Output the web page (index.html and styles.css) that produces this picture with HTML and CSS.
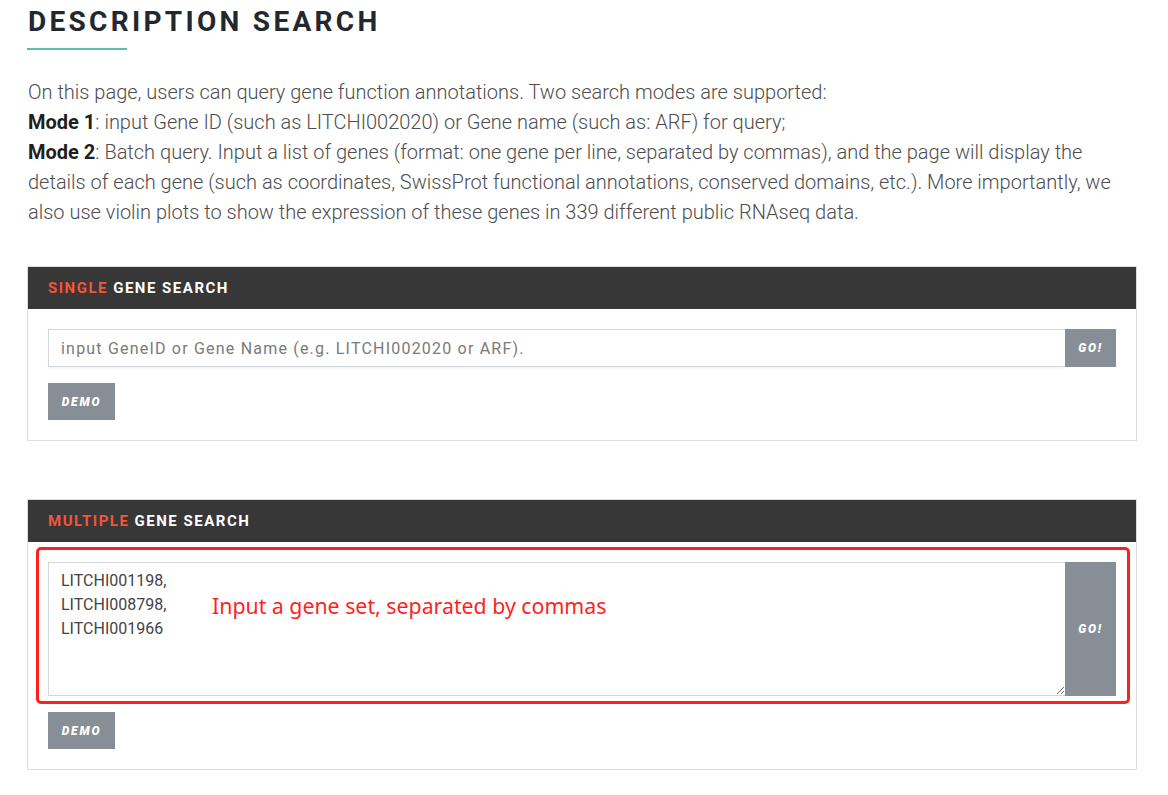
FILE: index.html
```html
<!DOCTYPE html>
<html lang="en">
<head>
<meta charset="utf-8">
<title>Description Search</title>
<link rel="stylesheet" href="styles.css">
</head>
<body>
<div class="page">
  <h1 class="title">DESCRIPTION SEARCH</h1>
  <div class="title-bar"></div>
  <p class="intro">On this page, users can query gene function annotations. Two search modes are supported:<br>
  <b>Mode 1</b>: input Gene ID (such as LITCHI002020) or Gene name (such as: ARF) for query;<br>
  <b>Mode 2</b>: Batch query. Input a list of genes (format: one gene per line, separated by commas), and the page will display the details of each gene (such as coordinates, SwissProt functional annotations, conserved domains, etc.). More importantly, we also use violin plots to show the expression of these genes in 339 different public RNAseq data.</p>

  <section class="panel">
    <div class="panel-head"><span class="accent">SINGLE</span> GENE SEARCH</div>
    <div class="panel-body">
      <div class="input-group">
        <input class="text-input" type="text" placeholder="input GeneID or Gene Name (e.g. LITCHI002020 or ARF).">
        <button class="btn btn-go">GO!</button>
      </div>
      <button class="btn btn-demo">DEMO</button>
    </div>
  </section>

  <section class="panel panel-multi">
    <div class="panel-head"><span class="accent">MULTIPLE</span> GENE SEARCH</div>
    <div class="panel-body">
      <div class="input-group area-group">
        <textarea class="text-area">LITCHI001198,
LITCHI008798,
LITCHI001966</textarea>
        <button class="btn btn-go btn-go-tall">GO!</button>
        <div class="annot-box"></div>
        <div class="annot-text">Input a gene set, separated by commas</div>
      </div>
      <button class="btn btn-demo">DEMO</button>
    </div>
  </section>
</div>
</body>
</html>
```

FILE: styles.css
```css
* { box-sizing: border-box; }
html, body { margin: 0; padding: 0; background: #fff; }
body { font-family: Roboto, "Liberation Sans", sans-serif; }
.page { padding: 5px 31px 40px 27px; width: 1168px; }
.title {
  margin: 0 0 0 1px;
  font-size: 28px;
  line-height: 34px;
  font-weight: 700;
  letter-spacing: 3.3px;
  color: #23272e;
}
.title-bar {
  width: 100px;
  height: 2px;
  background: #5cc0a8;
  margin-top: 9px;
}
.intro {
  margin: 27px 0 0 1px;
  font-size: 20px;
  line-height: 30px;
  font-weight: 300;
  color: #4d4d4d;
}
.intro b { font-weight: 700; color: #1f1f1f; }
.panel {
  margin-top: 39px;
  border: 1px solid #dedede;
  background: #fff;
}
.panel-multi { margin-top: 58px; }
.panel-head {
  background: #373737;
  height: 42px;
  line-height: 42px;
  padding-left: 20px;
  color: #fff;
  font-size: 15px;
  font-weight: 700;
  letter-spacing: 1.5px;
}
.accent { color: #f4553b; }
.panel-body { padding: 20px 20px 20px 20px; }
.input-group { display: flex; position: relative; }
.text-input {
  flex: 1;
  height: 38px;
  border: 1px solid #d3d6dc;
  border-right: none;
  padding: 0 12px;
  font-family: Roboto, sans-serif;
  font-size: 16px;
  color: #555;
  outline: none;
  letter-spacing: 1.2px;
  box-shadow: 0 2px 3px rgba(0,0,0,0.04);
}
.text-input::placeholder { color: #7a7a7a; }
.btn {
  border: none;
  background: #878e95;
  color: #fff;
  font-family: Roboto, sans-serif;
  font-size: 12px;
  font-weight: 900;
  font-style: italic;
  letter-spacing: 1.8px;
  cursor: pointer;
  padding: 0;
}
.btn-go { width: 51px; height: 38px; }
.btn-demo { margin-top: 16px; width: 67px; height: 37px; display: block; }
.text-area {
  flex: 1;
  height: 134px;
  border: 1px solid #d3d6dc;
  border-right: none;
  padding: 6px 12px;
  font-family: Roboto, sans-serif;
  font-size: 16px;
  line-height: 24px;
  color: #444;
  resize: vertical;
  outline: none;
}
.btn-go-tall { height: 134px; }
.annot-box {
  position: absolute;
  left: -12px;
  top: -15px;
  width: 1094px;
  height: 157px;
  border: 3px solid #ff1f1f;
  border-radius: 5px;
  pointer-events: none;
}
.annot-text {
  position: absolute;
  left: 164px;
  top: 29px;
  font-family: "Noto Sans", "Open Sans", sans-serif;
  font-size: 21.3px;
  color: #ff1f1f;
  pointer-events: none;
}
```
